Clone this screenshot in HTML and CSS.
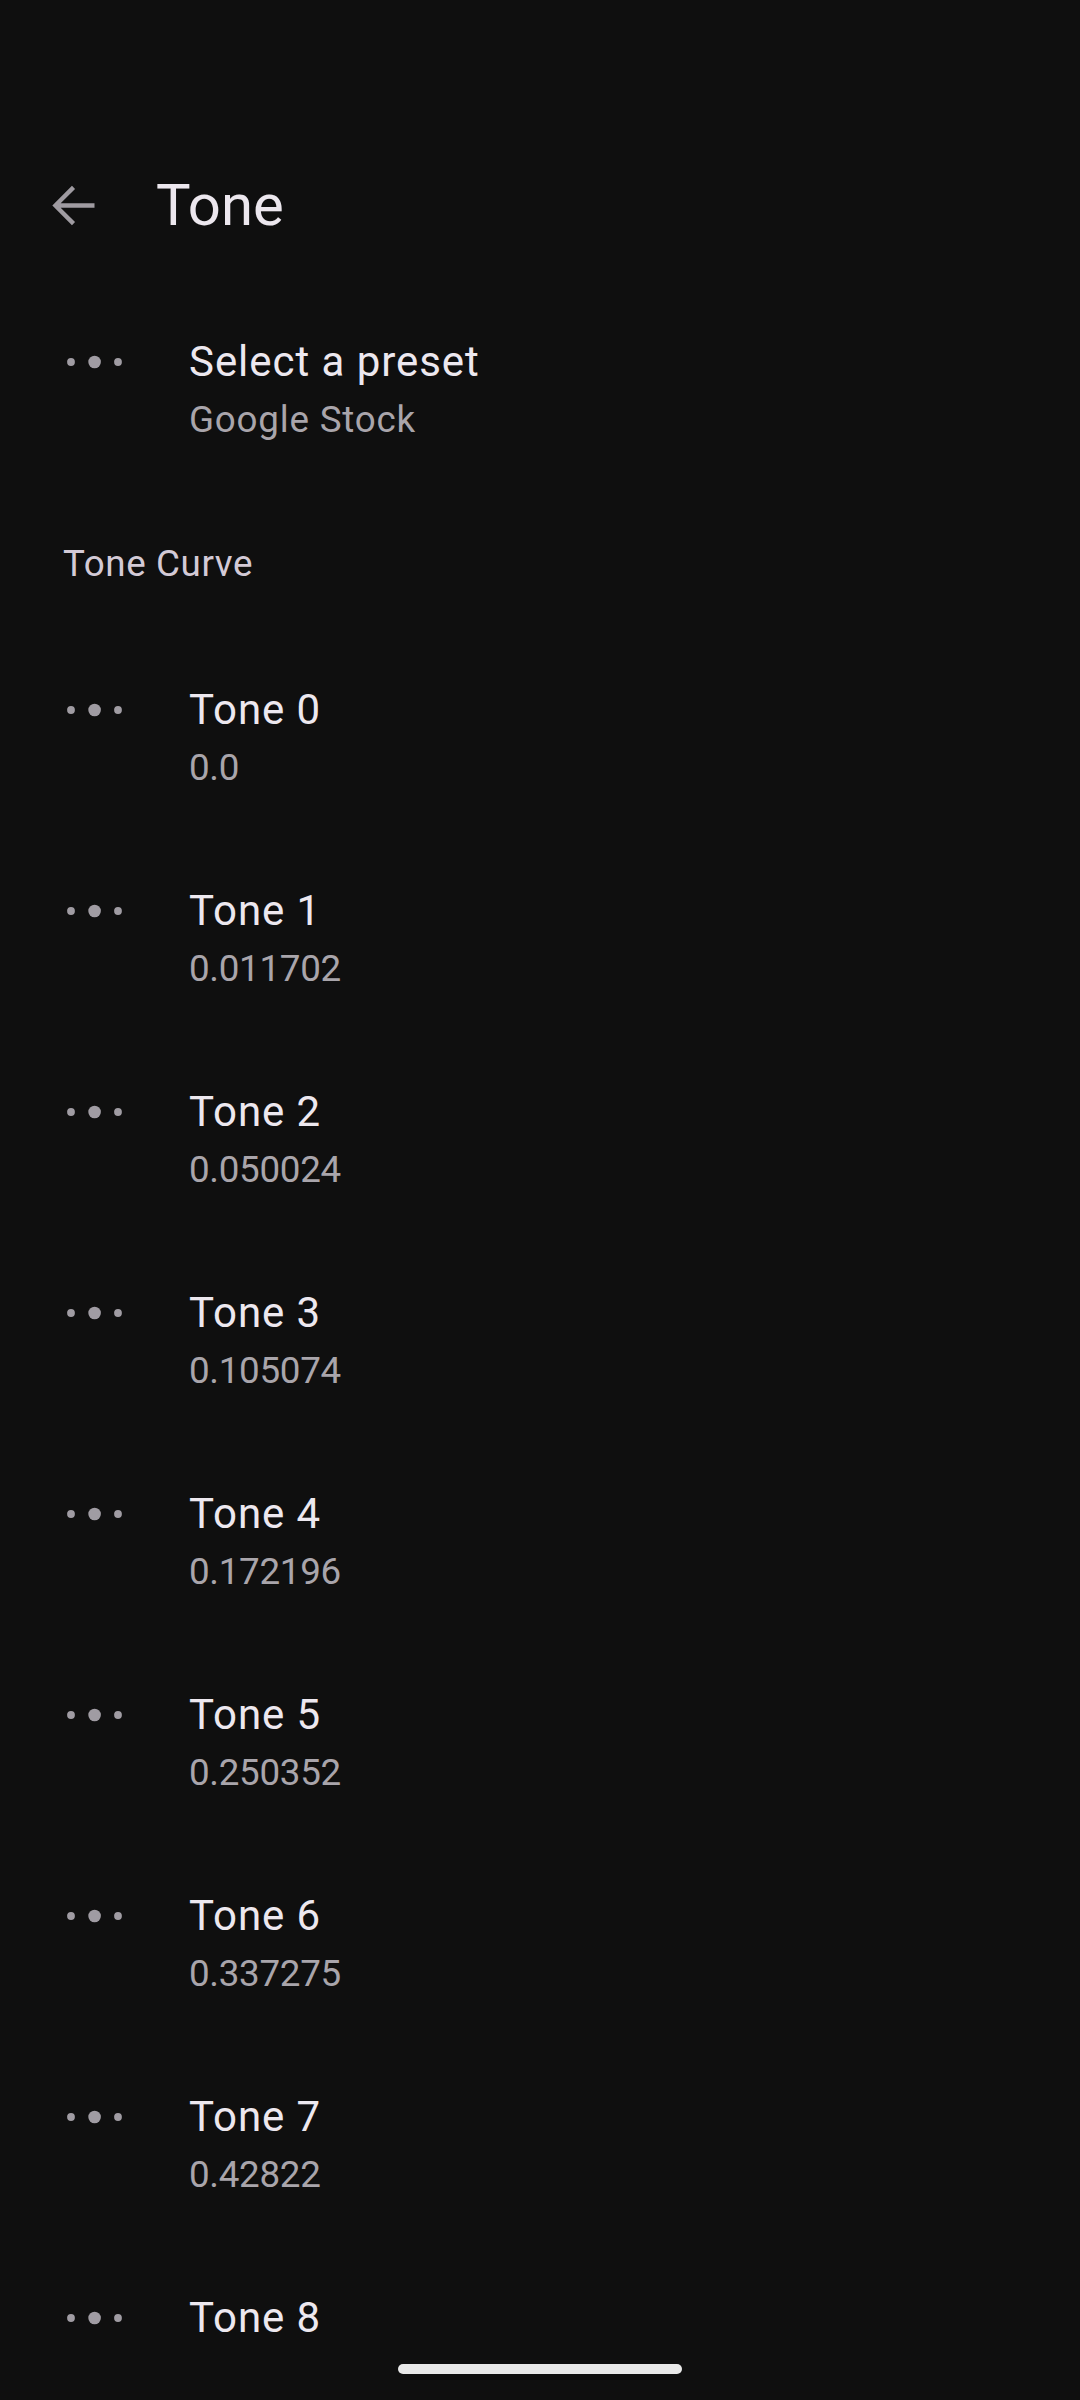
FILE: index.html
```html
<!DOCTYPE html>
<html lang="en">
  <head>
    <meta charset="UTF-8" />
    <meta name="viewport" content="width=device-width, initial-scale=1.0" />
    <title>Tone</title>
    <link rel="stylesheet" href="styles.css">
  </head>
  <body>
    <div class="screen">
      <div class="content">
        <div class="appbar">
          <button class="back" aria-label="Back">
            <svg width="63" height="63" viewBox="0 0 24 24">
              <path d="M20 12H5.6M12 5.1L5.1 12l6.9 6.9" fill="none" stroke="currentColor" stroke-width="1.65" />
            </svg>
          </button>
          <h1>Tone</h1>
        </div>

        <div class="pref first">
          <div class="pref-icon">
            <svg width="56" height="14" viewBox="0 0 56 14">
              <circle cx="4" cy="7" r="3.9" />
              <circle cx="27.6" cy="7" r="6.3" />
              <circle cx="51" cy="7" r="3.9" />
            </svg>
          </div>
          <div class="pref-text">
            <div class="pref-title">Select a preset</div>
            <div class="pref-summary">Google Stock</div>
          </div>
        </div>

        <div class="category">Tone Curve</div>

        <div id="tone-list"></div>
      </div>
      <div class="navbar"><div class="handle"></div></div>
    </div>

    <script>
      const tones = [
        "0.0",
        "0.011702",
        "0.050024",
        "0.105074",
        "0.172196",
        "0.250352",
        "0.337275",
        "0.42822",
        null,
      ];
      const list = document.getElementById("tone-list");
      const dots =
        '<svg width="56" height="14" viewBox="0 0 56 14">' +
        '<circle cx="4" cy="7" r="3.9" /><circle cx="27.6" cy="7" r="6.3" /><circle cx="51" cy="7" r="3.9" /></svg>';

      tones.forEach((value, i) => {
        const row = document.createElement("div");
        row.className = "pref";
        row.innerHTML = `
          <div class="pref-icon">${dots}</div>
          <div class="pref-text">
            <div class="pref-title">Tone ${i}</div>
            ${value !== null ? `<div class="pref-summary num">${value}</div>` : ""}
          </div>`;
        list.appendChild(row);
      });
    </script>
  </body>
</html>
```

FILE: styles.css
```css
body {
  margin: 0;
  background-color: #0f0f0f;
  font-family: Roboto, "Noto Sans", sans-serif;
  color: #ece7ee;
}
.screen {
  height: 2400px;
  display: flex;
  flex-direction: column;
  overflow: hidden;
}
.content {
  flex: 1;
  overflow: hidden;
}
.appbar {
  display: flex;
  align-items: center;
  height: 128px;
  padding: 141px 0 22px 42px;
}
.back {
  width: 63px;
  height: 63px;
  padding: 0;
  border: none;
  background: none;
  color: #9f9ba1;
}
.back svg {
  display: block;
}
h1 {
  margin: 0 0 0 51px;
  font-size: 58px;
  font-weight: 400;
  line-height: 72px;
  color: #ece7ee;
}
.pref {
  display: flex;
  padding: 42px 0 42px 67px;
  height: 117px;
}
.pref-icon {
  width: 56px;
  height: 57px;
  display: flex;
  align-items: center;
  fill: #a09ca3;
}
.pref-icon svg {
  display: block;
}
.pref-text {
  margin-left: 66px;
}
.pref-title {
  font-size: 42px;
  line-height: 57px;
  color: #ede8ef;
  letter-spacing: 0.95px;
}
.pref-summary {
  font-size: 36.75px;
  line-height: 60px;
  color: #a9a5ab;
  letter-spacing: 0.8px;
}
.pref-summary.num {
  letter-spacing: -0.3px;
}
.category {
  padding: 48px 0 51px 63px;
  font-size: 36.75px;
  line-height: 48px;
  color: #d3cad6;
  letter-spacing: 0.6px;
}
.navbar {
  height: 48px;
  display: flex;
  justify-content: center;
  padding-top: 12px;
  box-sizing: border-box;
}
.handle {
  width: 284px;
  height: 10px;
  border-radius: 5px;
  background-color: #e9e9e9;
}
```
